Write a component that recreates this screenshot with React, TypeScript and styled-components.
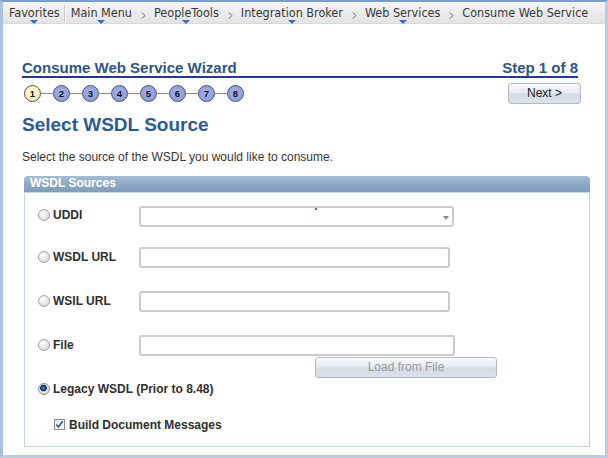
import React from 'react';
import styled, { createGlobalStyle } from 'styled-components';

const Global = createGlobalStyle`
  html, body { margin: 0; padding: 0; background: #fff; }
  body { font-family: "Liberation Sans", Arial, sans-serif; }
`;

const Frame = styled.div`
  box-sizing: border-box;
  width: 608px;
  height: 458px;
  border-top: 2px solid #7b9bc9;
  border-left: 3px solid #abc2de;
  border-right: 3px solid #b9cce3;
  border-bottom: 3px solid #b9cce3;
  background: #fff;
  overflow: hidden;
  display: flex;
  flex-direction: column;
`;

const NavBar = styled.nav`
  box-sizing: border-box;
  height: 22px;
  flex: none;
  display: flex;
  align-items: stretch;
  padding-left: 6px;
  background: linear-gradient(#f6f6f6, #e3e3e3);
  border-bottom: 1px solid #d9d9d9;
  font-family: "DejaVu Sans Condensed", "DejaVu Sans", sans-serif;
  font-size: 12.5px;
  line-height: 21px;
  color: #383838;
  white-space: nowrap;
`;

const NavItem = styled.span<{ $menu?: boolean }>`
  position: relative;
  display: block;
  &::after {
    content: '';
    display: ${p => (p.$menu ? 'block' : 'none')};
    position: absolute;
    left: 50%;
    bottom: -1px;
    margin-left: -4px;
    border-left: 4px solid transparent;
    border-right: 4px solid transparent;
    border-top: 4px solid #3d6db3;
  }
`;

const NavDivider = styled.span`
  width: 1px;
  margin: 3px 6px 0 4px;
  background: #cdcdcd;
  box-shadow: 1px 0 0 #fafafa;
`;

const Chevron = styled.span`
  display: flex;
  align-items: center;
  padding-top: 6px;
  margin: 0 8px 0 9px;
  color: #7a7a7a;
`;

const Content = styled.main`
  padding: 35px 27px 0 19px;
  display: flex;
  flex-direction: column;
`;

const WizardHeader = styled.header`
  display: flex;
  justify-content: space-between;
  align-items: baseline;
  border-bottom: 2px solid #29388f;
  font: bold 15px/17px "Liberation Sans", Arial, sans-serif;
  color: #30548c;
`;

const StepBar = styled.div`
  margin-top: 5px;
  height: 21px;
  display: flex;
  align-items: center;
  justify-content: space-between;
`;

const Steps = styled.ol`
  display: flex;
  align-items: center;
  margin: 0 0 0 2px;
  padding: 0;
  list-style: none;
`;

const Step = styled.li<{ $current?: boolean }>`
  box-sizing: border-box;
  width: 17px;
  height: 17px;
  border-radius: 50%;
  border: 1.5px solid #555;
  background: ${p =>
    p.$current
      ? 'radial-gradient(circle at 45% 40%, #fffbe0, #fbe9a6)'
      : 'radial-gradient(circle at 45% 40%, #a3b1ea, #8394d8)'};
  display: flex;
  align-items: center;
  justify-content: center;
  font: bold 9.5px/1 "Liberation Sans", Arial, sans-serif;
  color: #111;
`;

const Connector = styled.li`
  width: 12px;
  height: 1.5px;
  background: #8c8c8c;
`;

const Button = styled.button<{ $w: number; $disabled?: boolean }>`
  box-sizing: border-box;
  width: ${p => p.$w}px;
  height: 21px;
  padding: 0;
  border: 1px solid #b0b8c3;
  border-radius: 3px;
  background: linear-gradient(#f7f9fc, #e6ebf2 45%, #d4dce7 55%, #dbe2eb);
  box-shadow: inset 0 1px 0 #fff;
  font: 12px/19px "Liberation Sans", Arial, sans-serif;
  color: ${p => (p.$disabled ? '#999ba0' : '#1b1b1b')};
`;

const NextButton = styled(Button)`
  margin-right: -3px;
`;

const PageTitle = styled.h1`
  margin: 10px 0 0;
  font: bold 19px/22px "Liberation Sans", Arial, sans-serif;
  color: #2f5a94;
`;

const Intro = styled.p`
  margin: 14px 0 0;
  font: 12px/14px "Liberation Sans", Arial, sans-serif;
  color: #363636;
`;

const Group = styled.section`
  margin: 12px 0 0 2px;
  width: 566px;
`;

const GroupHeader = styled.h2`
  box-sizing: border-box;
  height: 17px;
  margin: 0;
  padding-left: 6px;
  border-radius: 4px 4px 0 0;
  background: linear-gradient(#a5bcd3, #8aa6c2 60%, #7f9dbb);
  border-bottom: 1px solid #c9d8e7;
  font: bold 12px/15px "Liberation Sans", Arial, sans-serif;
  color: #fff;
`;

const GroupBody = styled.div`
  border: 1px solid #c3d2e0;
  border-top: none;
  padding: 13px 0 14px 13px;
  display: flex;
  flex-direction: column;
`;

const FieldRow = styled.div<{ $mt: number }>`
  margin-top: ${p => p.$mt}px;
  height: 21px;
  display: grid;
  grid-template-columns: 101px auto;
  align-items: center;
`;

const Choice = styled.label<{ $lift?: number }>`
  display: flex;
  align-items: center;
  gap: 3px;
  padding-bottom: ${p => (p.$lift || 0) * 2}px;
  font: bold 12px/14px "Liberation Sans", Arial, sans-serif;
  color: #303030;
`;

const Radio = styled.input.attrs({ type: 'radio' })`
  appearance: none;
  box-sizing: border-box;
  width: 12px;
  height: 12px;
  margin: 0;
  border-radius: 50%;
  border: 1px solid #a4a4a4;
  background: radial-gradient(circle at 40% 35%, #ffffff, #e2e2e2 60%, #cdcdcd);
  &:checked {
    border-color: #8d8d8d;
    background: radial-gradient(circle at 45% 40%, #7fa6e6 0, #234a8e 1.5px, #14316a 3px, transparent 3.8px),
      radial-gradient(circle at 40% 35%, #ffffff, #e2e2e2 60%, #cdcdcd);
  }
`;

const TextField = styled.input.attrs({ type: 'text' })<{ $w: number }>`
  box-sizing: border-box;
  width: ${p => p.$w}px;
  height: 21px;
  margin: 0;
  border: 2px solid #cbcbcb;
  border-radius: 3px;
  background: #fff;
  outline: none;
`;

const SelectBox = styled.div<{ $w: number }>`
  position: relative;
  box-sizing: border-box;
  width: ${p => p.$w}px;
  height: 21px;
  border: 2px solid #cbcbcb;
  border-radius: 3px;
  background: #fff;
  display: flex;
  align-items: center;
  justify-content: flex-end;
  padding-right: 3px;
`;

const Caret = styled.span`
  width: 0;
  height: 0;
  margin-top: 2px;
  border-left: 3.5px solid transparent;
  border-right: 3.5px solid transparent;
  border-top: 4px solid #8e8e8e;
`;

const Speck = styled.span`
  position: absolute;
  left: 174px;
  top: 0;
  width: 2px;
  height: 2px;
  background: #5662f5;
`;

const LoadRow = styled.div`
  margin-top: 1px;
  padding-left: 277px;
  display: flex;
`;

const OptionRow = styled.div<{ $mt: number; $indent?: number }>`
  margin-top: ${p => p.$mt}px;
  padding-left: ${p => p.$indent || 0}px;
  height: 15px;
  display: flex;
  align-items: center;
`;

const CheckChoice = styled.label`
  display: flex;
  align-items: center;
  gap: 4px;
  font: bold 12px/14px "Liberation Sans", Arial, sans-serif;
  color: #303030;
`;

const CheckBox = styled.span`
  box-sizing: border-box;
  width: 11px;
  height: 11px;
  border: 1px solid #8e8e8e;
  background: linear-gradient(135deg, #e6e6e6, #ffffff);
  display: flex;
  align-items: center;
  justify-content: center;
`;

const crumbs = [
  { label: 'PeopleTools', menu: true },
  { label: 'Integration Broker', menu: true },
  { label: 'Web Services', menu: true },
  { label: 'Consume Web Service', menu: false },
];

const ChevronIcon = () => (
  <svg width="5" height="7" viewBox="0 0 5 7" aria-hidden="true">
    <polyline points="0.6,0.6 4.2,3.5 0.6,6.4" fill="none" stroke="#7c7c7c" strokeWidth="1" />
  </svg>
);

export default function App() {
  const steps = [1, 2, 3, 4, 5, 6, 7, 8];
  return (
    <>
      <Global />
      <Frame>
        <NavBar>
          <NavItem $menu>Favorites</NavItem>
          <NavDivider />
          <NavItem $menu>Main Menu</NavItem>
          {crumbs.map(c => (
            <React.Fragment key={c.label}>
              <Chevron>
                <ChevronIcon />
              </Chevron>
              <NavItem $menu={c.menu}>{c.label}</NavItem>
            </React.Fragment>
          ))}
        </NavBar>
        <Content>
          <WizardHeader>
            <span>Consume Web Service Wizard</span>
            <span>Step 1 of 8</span>
          </WizardHeader>
          <StepBar>
            <Steps>
              {steps.map((n, i) => (
                <React.Fragment key={n}>
                  {i > 0 && <Connector />}
                  <Step $current={n === 1}>{n}</Step>
                </React.Fragment>
              ))}
            </Steps>
            <NextButton $w={73}>Next &gt;</NextButton>
          </StepBar>
          <PageTitle>Select WSDL Source</PageTitle>
          <Intro>Select the source of the WSDL you would like to consume.</Intro>
          <Group>
            <GroupHeader>WSDL Sources</GroupHeader>
            <GroupBody>
              <FieldRow $mt={0}>
                <Choice $lift={2}>
                  <Radio name="src" />
                  UDDI
                </Choice>
                <SelectBox $w={315} role="combobox">
                  <Speck />
                  <Caret />
                </SelectBox>
              </FieldRow>
              <FieldRow $mt={20}>
                <Choice $lift={1}>
                  <Radio name="src" />
                  WSDL URL
                </Choice>
                <TextField $w={311} />
              </FieldRow>
              <FieldRow $mt={23}>
                <Choice $lift={1}>
                  <Radio name="src" />
                  WSIL URL
                </Choice>
                <TextField $w={311} />
              </FieldRow>
              <FieldRow $mt={23}>
                <Choice $lift={1}>
                  <Radio name="src" />
                  File
                </Choice>
                <TextField $w={316} />
              </FieldRow>
              <LoadRow>
                <Button $w={182} $disabled disabled>
                  Load from File
                </Button>
              </LoadRow>
              <OptionRow $mt={3}>
                <Choice>
                  <Radio name="src" defaultChecked />
                  Legacy WSDL (Prior to 8.48)
                </Choice>
              </OptionRow>
              <OptionRow $mt={21} $indent={16}>
                <CheckChoice>
                  <CheckBox role="checkbox" aria-checked="true">
                    <svg width="9" height="9" viewBox="0 0 9 9" aria-hidden="true">
                      <polyline
                        points="1.3,4.6 3.4,7 7.8,1.3"
                        fill="none"
                        stroke="#2f56a8"
                        strokeWidth="1.6"
                      />
                    </svg>
                  </CheckBox>
                  Build Document Messages
                </CheckChoice>
              </OptionRow>
            </GroupBody>
          </Group>
        </Content>
      </Frame>
    </>
  );
}
